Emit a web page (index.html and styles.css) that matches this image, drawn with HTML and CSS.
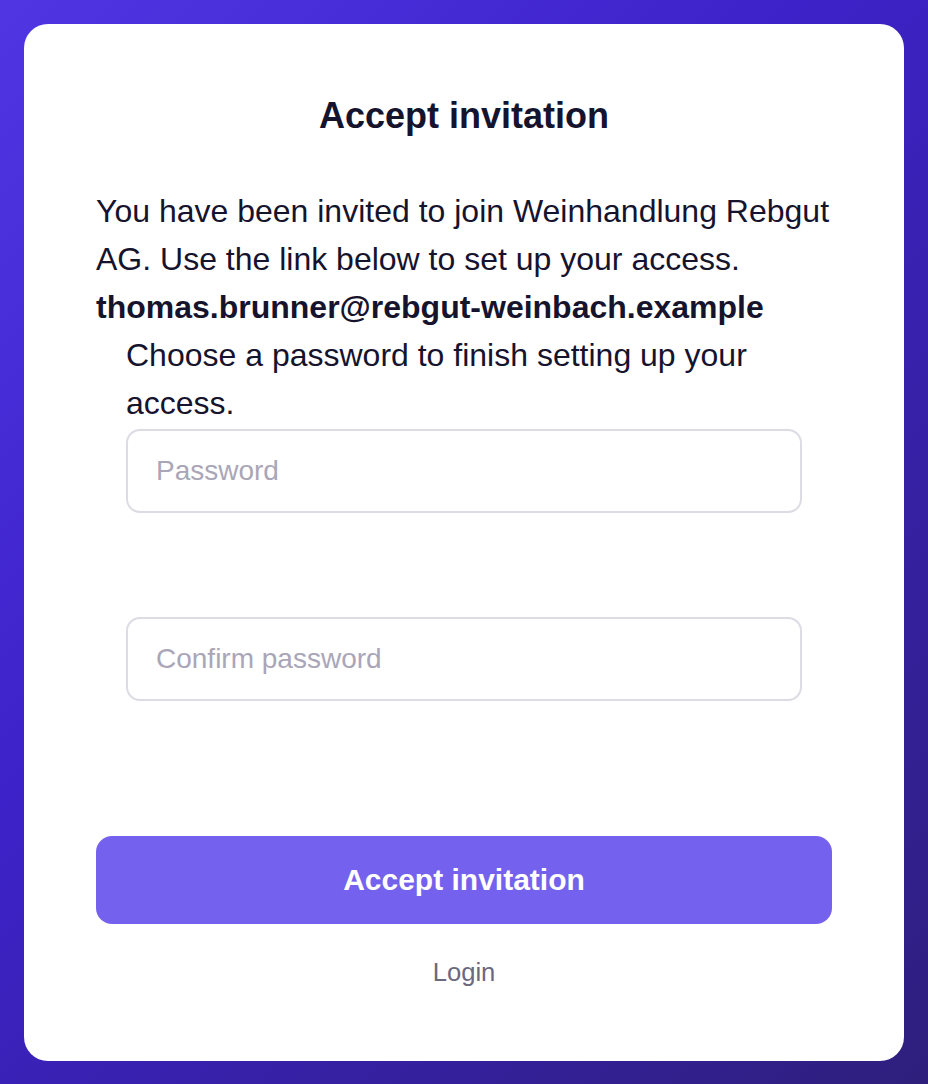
FILE: index.html
```html
<!DOCTYPE html>
<html lang="en">
<head>
<meta charset="utf-8">
<title>Accept invitation</title>
<link rel="stylesheet" href="styles.css">
</head>
<body>
<main class="card">
  <h1 class="title">Accept invitation</h1>
  <p class="intro">You have been invited to join Weinhandlung Rebgut AG. Use the link below to set up your access. <strong class="email">thomas.brunner@rebgut-weinbach.example</strong></p>
  <form class="form">
    <div class="fields">
      <p class="hint">Choose a password to finish setting up your access.</p>
      <div class="field"><input class="input" type="password" placeholder="Password"></div>
      <div class="field"><input class="input" type="password" placeholder="Confirm password"></div>
    </div>
    <button class="submit" type="button">Accept invitation</button>
    <a class="login" href="#">Login</a>
  </form>
</main>
</body>
</html>
```
FILE: styles.css
```css
* { box-sizing: border-box; }
html, body { margin: 0; }
body {
  min-height: 100vh;
  padding: 24px;
  font-family: "Liberation Sans", Arial, sans-serif;
  color: #16132d;
  background: linear-gradient(135deg, #5036e3 0%, #3d22c9 40%, #2e1f7c 100%);
}
.card {
  background: #ffffff;
  border-radius: 24px;
  padding: 72px 72px 70px;
}
.title {
  margin: 0 0 51px;
  font-size: 36px;
  line-height: 1.1;
  font-weight: 700;
  text-align: center;
}
.intro {
  margin: 0;
  font-size: 32px;
  line-height: 1.5;
}
.email {
  display: block;
  font-weight: 700;
}
.form {
  display: flex;
  flex-direction: column;
}
.fields {
  padding: 0 30px;
  display: flex;
  flex-direction: column;
  gap: 104px;
  margin-bottom: 135px;
}
.hint {
  margin: 0 0 -102px;
  font-size: 32px;
  line-height: 1.5;
}
.field { display: flex; }
.input {
  width: 100%;
  height: 84px;
  padding: 0 28px;
  border: 2px solid #dddce4;
  border-radius: 14px;
  font-family: inherit;
  font-size: 28px;
  color: #16132d;
  background: #ffffff;
  outline: none;
}
.input::placeholder { color: #aaa6b8; }
.submit {
  height: 88px;
  border: 0;
  border-radius: 16px;
  background: #7462ee;
  color: #ffffff;
  font-family: inherit;
  font-size: 30px;
  font-weight: 700;
}
.login {
  margin-top: 29px;
  align-self: center;
  font-size: 25.6px;
  line-height: 1.5;
  color: #6b6880;
  text-decoration: none;
}
```
